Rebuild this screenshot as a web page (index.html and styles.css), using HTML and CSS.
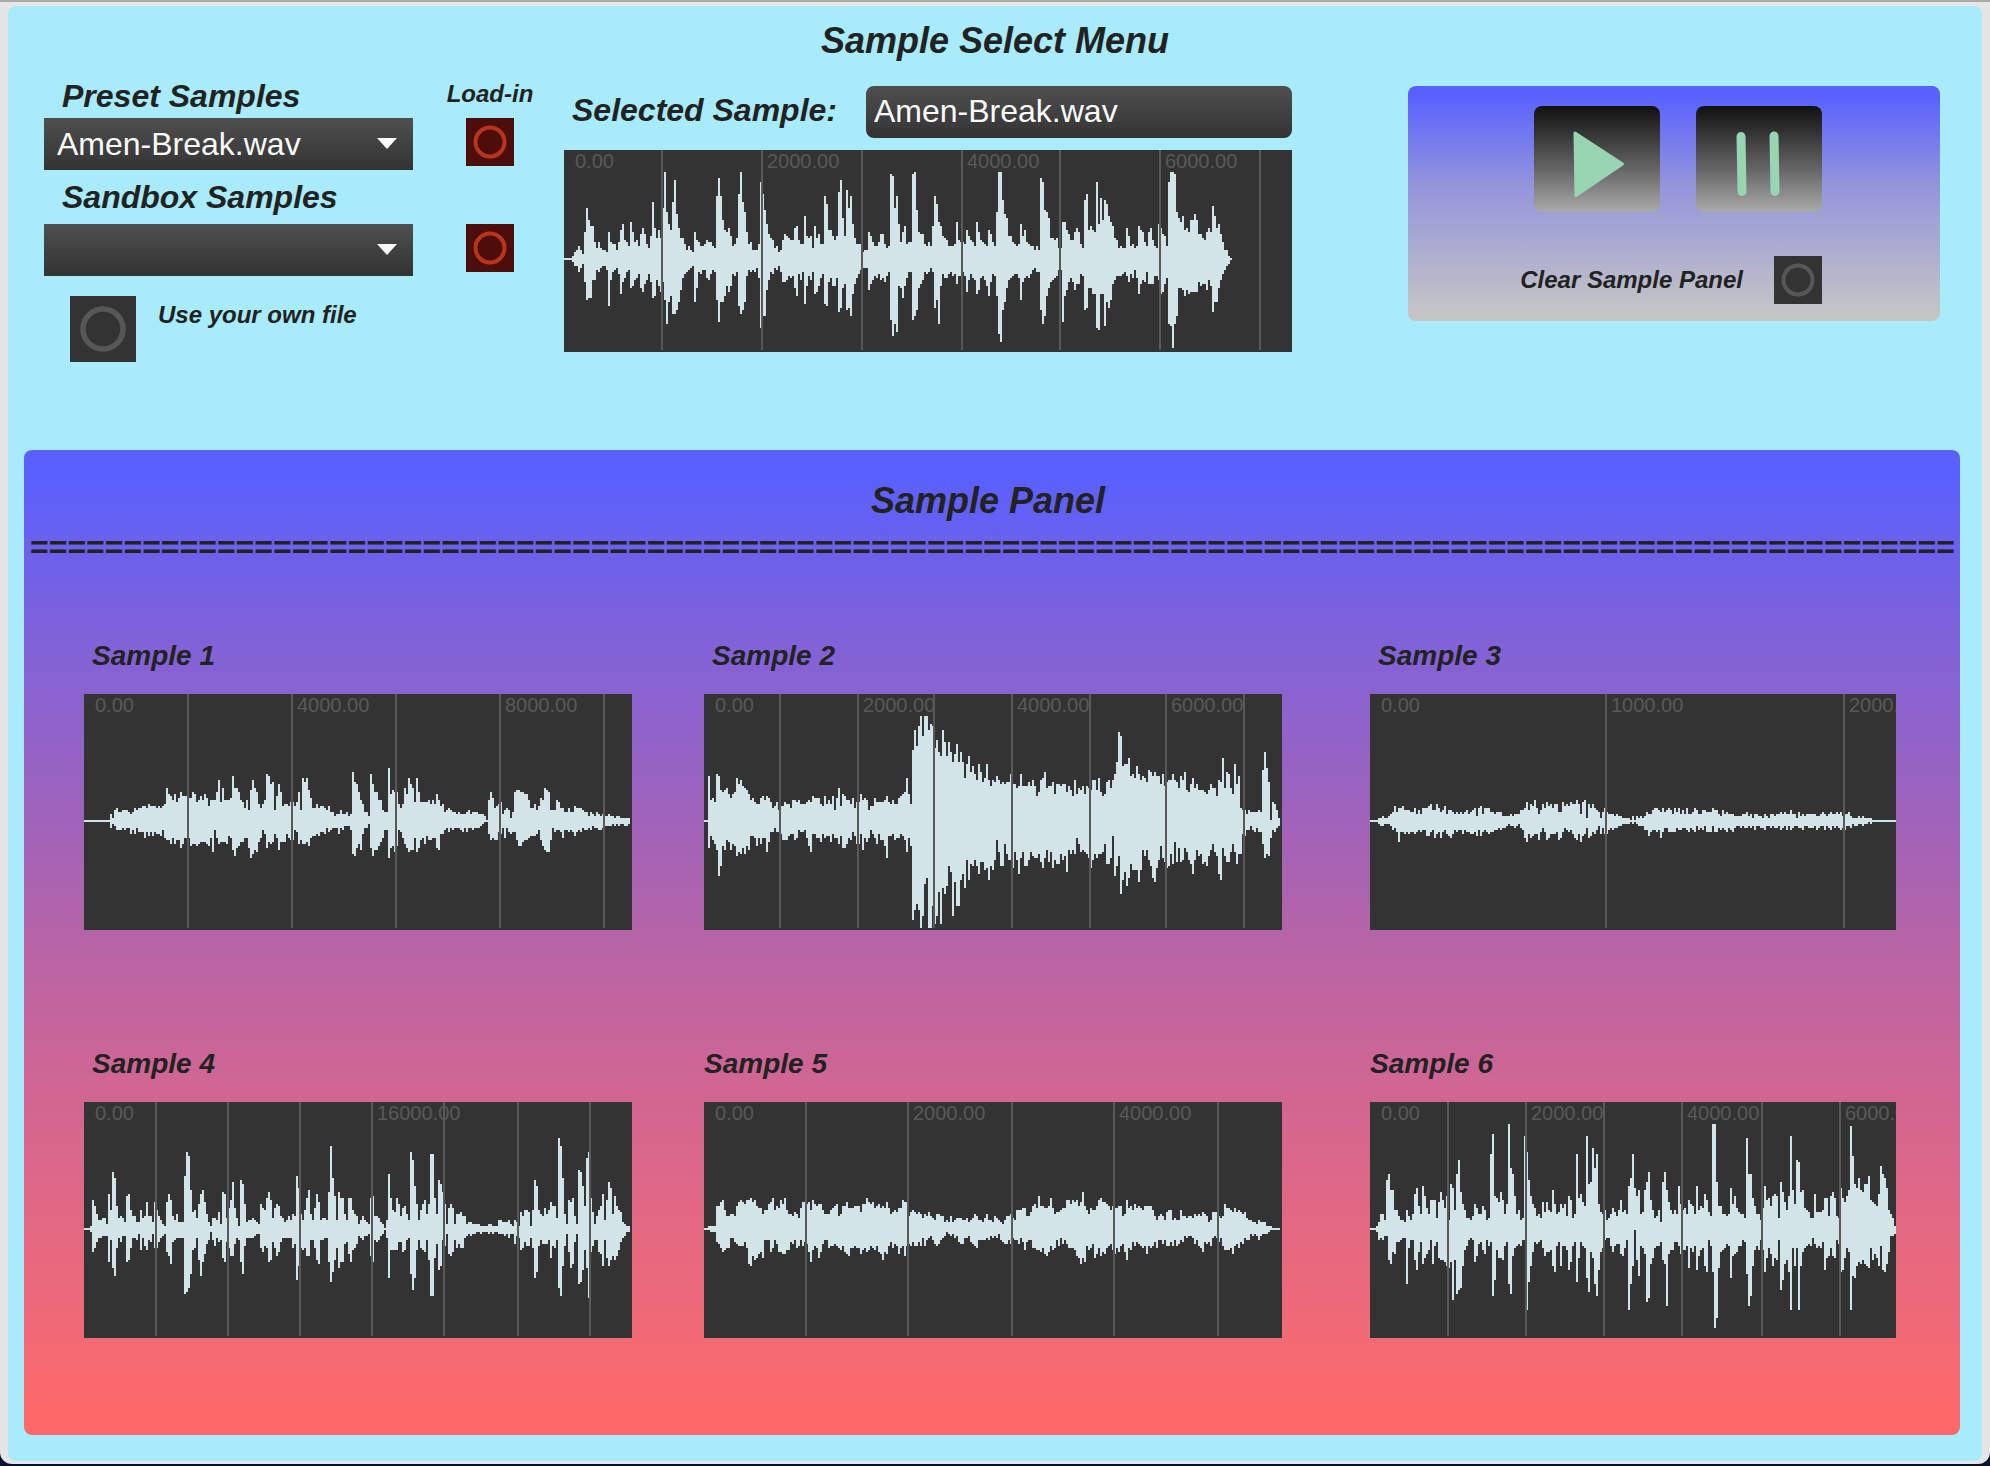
FILE: index.html
```html
<!DOCTYPE html>
<html lang="en">
<head>
<meta charset="utf-8">
<meta name="viewport" content="width=device-width, initial-scale=1">
<title>Sample Select Menu</title>
<link rel="stylesheet" href="styles.css">
</head>
<body>
<div class="window">
<main class="patch">
  <h1 class="title">Sample Select Menu</h1>

  <section class="menu">
    <div class="sources">
      <label class="heading" for="preset">Preset Samples</label>
      <span class="small load-title">Load-in</span>

      <div class="dropdown">
        <select id="preset"><option>Amen-Break.wav</option></select>
      </div>
      <button class="bang bang-red" type="button" aria-label="Load preset sample">
        <svg viewBox="0 0 48 48"><circle cx="24" cy="24" r="14.5" stroke-width="4"/></svg>
      </button>

      <label class="heading heading-mid" for="sandbox">Sandbox Samples</label>

      <div class="dropdown">
        <select id="sandbox"><option></option></select>
      </div>
      <button class="bang bang-red" type="button" aria-label="Load sandbox sample">
        <svg viewBox="0 0 48 48"><circle cx="24" cy="24" r="14.5" stroke-width="4"/></svg>
      </button>

      <div class="own-file">
        <button class="bang bang-large" id="own" type="button">
          <svg viewBox="0 0 66 66"><circle cx="33" cy="33" r="20" stroke-width="5.5"/></svg>
        </button>
        <label class="small" for="own">Use your own file</label>
      </div>
    </div>

    <div class="selected">
      <div class="selected-row">
        <label class="heading" for="selected">Selected Sample:</label>
        <input class="readout" id="selected" type="text" value="Amen-Break.wav" readonly>
      </div>
      <svg class="wave wave-short" data-wave="selected" data-axis="108">
        <path class="signal"/>
        <path class="grid" d="M98 0V200M198 0V200M298 0V200M398 0V200M496 0V200M596 0V200M696 0V200"/>
        <text x="11" y="18">0.00</text>
        <text x="203" y="18">2000.00</text>
        <text x="403" y="18">4000.00</text>
        <text x="601" y="18">6000.00</text>
      </svg>
    </div>

    <div class="transport">
      <div class="transport-buttons">
        <button class="key" type="button" aria-label="Play">
          <svg viewBox="0 0 126 106"><path class="play" d="M41 27L88.500 58L42 89.500Z"/></svg>
        </button>
        <button class="key" type="button" aria-label="Pause">
          <svg viewBox="0 0 126 106"><path class="pause" d="M45 30.500L46 85.500M78 30L79 85.500"/></svg>
        </button>
      </div>
      <div class="clear">
        <label class="small" for="clear">Clear Sample Panel</label>
        <button class="bang" id="clear" type="button">
          <svg viewBox="0 0 48 48"><circle cx="24" cy="24" r="14.5" stroke-width="4"/></svg>
        </button>
      </div>
    </div>
  </section>

  <section class="panel">
    <h2 class="title panel-title">Sample Panel</h2>
    <div class="rule" aria-hidden="true">=======================================================================================================</div>

    <div class="samples">
      <article class="sample">
        <h3>Sample 1</h3>
        <svg class="wave" data-wave="s1" data-axis="126">
          <path class="signal"/>
          <path class="grid" d="M104 0V234M208 0V234M312 0V234M416 0V234M520 0V234"/>
          <text x="11" y="18">0.00</text>
          <text x="213" y="18">4000.00</text>
          <text x="421" y="18">8000.00</text>
        </svg>
      </article>
      <article class="sample">
        <h3>Sample 2</h3>
        <svg class="wave" data-wave="s2" data-axis="126">
          <path class="signal"/>
          <path class="grid" d="M76 0V234M154 0V234M230 0V234M308 0V234M386 0V234M462 0V234M540 0V234"/>
          <text x="11" y="18">0.00</text>
          <text x="159" y="18">2000.00</text>
          <text x="313" y="18">4000.00</text>
          <text x="467" y="18">6000.00</text>
        </svg>
      </article>
      <article class="sample sample-last">
        <h3>Sample 3</h3>
        <svg class="wave" data-wave="s3" data-axis="126">
          <path class="signal"/>
          <path class="grid" d="M236 0V234M474 0V234"/>
          <text x="11" y="18">0.00</text>
          <text x="241" y="18">1000.00</text>
          <text x="479" y="18">2000.00</text>
        </svg>
      </article>
      <article class="sample">
        <h3>Sample 4</h3>
        <svg class="wave" data-wave="s4" data-axis="126">
          <path class="signal"/>
          <path class="grid" d="M72 0V234M144 0V234M216 0V234M288 0V234M360 0V234M434 0V234M506 0V234"/>
          <text x="11" y="18">0.00</text>
          <text x="293" y="18">16000.00</text>
        </svg>
      </article>
      <article class="sample sample-flush">
        <h3>Sample 5</h3>
        <svg class="wave" data-wave="s5" data-axis="126">
          <path class="signal"/>
          <path class="grid" d="M102 0V234M204 0V234M308 0V234M410 0V234M514 0V234"/>
          <text x="11" y="18">0.00</text>
          <text x="209" y="18">2000.00</text>
          <text x="415" y="18">4000.00</text>
        </svg>
      </article>
      <article class="sample sample-last sample-flush">
        <h3>Sample 6</h3>
        <svg class="wave" data-wave="s6" data-axis="126">
          <path class="signal"/>
          <path class="grid" d="M78 0V234M156 0V234M234 0V234M312 0V234M392 0V234M470 0V234"/>
          <text x="11" y="18">0.00</text>
          <text x="161" y="18">2000.00</text>
          <text x="317" y="18">4000.00</text>
          <text x="475" y="18">6000.00</text>
        </svg>
      </article>
    </div>
  </section>
</main>
</div>
<script src="waves.js"></script>
</body>
</html>
```
FILE: styles.css
```css
* { box-sizing: border-box; }

body {
  margin: 0;
  padding-bottom: 2px;
  background: #04122f;
  color: #222;
  font-family: "Liberation Sans", Arial, sans-serif;
}

button, select, input { font: inherit; border: 0; margin: 0; }
svg { display: block; }

.window {
  padding: 4px 8px 3px;
  border-top: 2px solid #ababab;
  border-radius: 0 0 12px 12px;
  background: #e5e5e5;
}

.patch {
  padding: 15px 0 26px;
  border-radius: 8px;
  background: #a8ebfb;
}

.title {
  margin: 0;
  font-size: 36px;
  font-weight: bold;
  font-style: italic;
  line-height: 40px;
  text-align: center;
}

.heading {
  font-size: 32px;
  font-weight: bold;
  font-style: italic;
  line-height: 36px;
  white-space: nowrap;
}

.small {
  font-size: 24px;
  font-weight: bold;
  font-style: italic;
  line-height: 32px;
  white-space: nowrap;
}

/* Upper menu */
.menu {
  display: grid;
  grid-template-columns: 489fr 728fr 617fr;
  column-gap: 31px;
  align-items: start;
  margin-top: 17px;
  padding: 0 42px 0 36px;
}

.sources {
  display: grid;
  grid-template-columns: 1fr 86px;
  grid-template-rows: 40px 52px 54px 52px auto;
  column-gap: 34px;
  justify-items: center;
  align-items: start;
}
.sources > .heading { justify-self: start; padding-left: 18px; }
.sources > .heading-mid { grid-column: 1 / -1; align-self: center; }

.dropdown {
  position: relative;
  width: 100%;
}
.dropdown::after {
  content: "";
  position: absolute;
  top: 20px;
  right: 16px;
  border: 10px solid transparent;
  border-top: 11px solid #fafafa;
  border-bottom: 0;
  pointer-events: none;
}
.dropdown select {
  display: block;
  width: 100%;
  height: 52px;
  padding: 0 48px 0 13px;
  appearance: none;
  border-radius: 0;
  background: linear-gradient(#4f4f4f, #333);
  color: #fafafa;
  font-size: 32px;
}

.bang {
  flex: none;
  width: 48px;
  height: 48px;
  padding: 0;
  background: #333;
}
.bang circle { fill: none; stroke: #575757; }
.bang-red { background: #4b0e0b; }
.bang-red circle { stroke: #b8341c; }
.bang-large { width: 66px; height: 66px; }

.own-file {
  grid-column: 1 / -1;
  justify-self: start;
  display: flex;
  gap: 22px;
  padding: 20px 0 0 26px;
}
.own-file .small { line-height: 38px; }

.selected { padding-top: 8px; }
.selected-row {
  display: flex;
  justify-content: space-between;
  margin-bottom: 12px;
  padding-left: 8px;
}
.selected-row .heading { line-height: 48px; }

.readout {
  flex: 0 1 426px;
  min-width: 0;
  height: 52px;
  padding: 0 8px 2px;
  border-radius: 8px;
  background: linear-gradient(#4f4f4f, #333);
  color: #fafafa;
  font-size: 32px;
}

.transport {
  margin: 8px 0 0 85px;
  padding: 20px 118px 17px 0;
  border-radius: 8px;
  background: linear-gradient(#5860ff 3%, #9494dc 42%, #c5c5c5 97%);
}
.transport-buttons {
  display: flex;
  justify-content: flex-end;
  gap: 36px;
  margin-bottom: 44px;
}
.key {
  width: 126px;
  height: 106px;
  padding: 0;
  border-radius: 8px;
  background: linear-gradient(#111, #333 25%, #666 60%, #aaa);
}
.play {
  fill: #98d5b3;
  stroke: #98d5b3;
  stroke-width: 3;
  stroke-linejoin: round;
}
.pause {
  fill: none;
  stroke: #98d5b3;
  stroke-width: 9;
  stroke-linecap: round;
}
.clear {
  display: flex;
  justify-content: flex-end;
  align-items: center;
  gap: 31px;
}

/* Waveform displays */
.wave {
  width: 100%;
  height: 236px;
  overflow: hidden;
  background: #333;
}
.wave-short { height: 202px; }
.wave .signal { fill: #d3e4e8; shape-rendering: crispEdges; }
.wave .grid { fill: none; stroke: #595959; stroke-width: 2; }
.wave text { fill: #595959; font-size: 20px; }

/* Lower panel */
.panel {
  margin: 88px 22px 0 16px;
  padding: 31px 0 97px;
  border-radius: 8px;
  background: linear-gradient(#5860ff 2%, #7c62dc 17%, #b864a4 51%, #ce6695 63%, #f36a74 91%, #ff6868 99%);
}
.panel-title { padding-right: 8px; }
.rule {
  margin-top: 6px;
  padding-left: 6px;
  overflow: hidden;
  font-size: 32px;
  font-weight: bold;
  line-height: 40px;
  white-space: nowrap;
}
.samples {
  display: grid;
  grid-template-columns: 548fr 578fr 542fr;
  gap: 116px 72px;
  margin-top: 71px;
  padding: 0 64px 0 60px;
}
.sample { min-width: 0; }
.sample-last { padding-left: 16px; }
.sample h3 {
  margin: 0 0 20px;
  padding-left: 8px;
  font-size: 28px;
  font-style: italic;
  line-height: 36px;
}
.sample-flush h3 { padding-left: 0; }
```
FILE: waves.js
```js
// Peak levels above and below the axis, one number per two-pixel column.
// "4*3" repeats a level; the key is the first column of each run.
const waves = {
  selected: {
    up: {
      0: "0*4 1 3 4 6 4 2 13 25 19 16 16 8 5 8 5 4 4 3 13 8 7 7 4 8 14 17 9 8 6 18 13 8 9 6 12 15 12 7 5 11 28 15 10 14 10 25",
      50: "43 23 17 14 28 39 22 15 10 10 7 4 6 4 3 13 9 8 6 6 7 9 8 8 6 5 31 40 31 19 14 13 15 11 6 7 10 32 43 28 23 13 7 8 4 4 4 7 38 32",
      100: "24 17 12 10 9 5 6 3 4 9 12 11 10 9 9 15 16 9 7 7 21 11 10 11 5 16 10 12 7 7 31 27 14 14 11 9 11 33 39 20 11 34 25 31 17 10 7 7 7 3",
      150: "4 4 13 11 8 6 6 8 12 12 7 5 6 42 41 25 31 17 8 13 16 7 8 8 42 43 24 13 12 12 7 6 8 6 16 31 27 18 16 11 10 9 6 6 6 7 18 9 8 8",
      200: "7 14 11 9 8 6 18 13 9 8 7 6 14 12 8 6 23 43 43 29 22 20 11 11 8 7 6 7 17 11 14 8 7 6 6 4 6 4 40 38 24 23 20 10 10 9 10 5 5 18",
      250: "18 14 12 9 9 13 15 13 7 5 29 32 14 16 14 13 38 17 30 19 29 27 21 18 16 10 9 5 6 5 5 15 11 6 7 5 6 16 14 13 8 6 13 15 9 6 5 17 15 12",
      300: "11 6 38 43 43 42 23 20 18 21 14 15 13 19 19 22 19 12 12 10 9 13 15 13 26 21 15 17 12 8 4 4 1 0"
    },
    down: {
      0: "0*4 1 3 3 6 4 2 11 20 19 19 10 10 5 6 4 3 3 5 23 10 6 5 4 7 17 11 9 6 5 14 13 10 9 7 14 16 12 10 7 11 19 18 10 13 16 11",
      50: "20 32 21 18 27 27 25 21 15 9 7 6 5 4 3 21 14 6 7 5 5 9 10 7 5 6 20 31 21 21 18 13 16 13 7 8 6 23 27 25 21 8 5 6 5 6 4 9 34 28",
      100: "28 15 10 6 7 4 5 3 6 11 11 10 8 9 8 14 18 7 10 6 22 13 8 10 6 17 16 13 9 7 22 23 11 9 13 13 9 26 24 14 12 25 24 28 17 12 9 7 5 4",
      150: "4 4 15 12 10 8 9 7 10 9 11 8 6 30 38 32 36 13 14 19 13 9 6 6 30 28 25 14 12 10 6 7 6 4 6 24 20 32 13 7 9 9 7 6 8 7 12 8 8 6",
      200: "8 16 10 7 9 10 17 15 9 8 10 13 18 11 7 8 18 37 41 25 21 14 10 9 8 7 7 9 20 11 9 8 9 7 5 4 6 6 25 32 28 18 14 11 10 9 8 5 5 31",
      250: "18 15 11 9 11 15 12 12 7 8 25 24 14 14 17 17 34 35 17 17 33 21 24 20 12 10 8 8 8 7 6 8 11 7 9 5 9 17 12 10 11 6 12 12 12 8 8 10 17 16",
      300: "12 9 32 33 44 32 28 14 14 15 18 15 17 16*4 11 13 12 12 15 10 13 26 21 21 14 10 7 5 3 2 0"
    }
  },
  s1: {
    up: {
      0: "0*13 3 1 5 6 4 4 5 5 5 4 3 4 6 5 6 6 7 7 6 8 7 7 7 6 7 6 7 8 16 13 12 10 13 9 11 14 12 12 12",
      52: "11 11 14 13 9 10 12 10 13 11 7 10 10 10 14 20 9 16 10 10 10 11 22 16 16 14 10 9 6 10 5 15 20 16 14 8 6 8 10 23 22 18 19 5 12 18 14 7 8 8 7 9",
      104: "9 7 9 14 5 21 19 21 15 11 6 6 8 6 7 7 6 5 7 4 4 2 3 3 5 3 3 4 2 3 24 19 18 14 10 8 4 4 2 23 18 14 14 10 10 5 4 4 26 13 15 14",
      156: "14 8 6 8 16 13 21 18 16 9 21 14 9*4 10 8 10 8 13 10 7 8 4 5 6 5 4 4 3 4 3 3 3 4 5 3 4 4 4 3 3 3 2 0 10 14 11 6 7 8",
      208: "9 3 5 6 5 1 4 14 15 15 14 14 13 13 10 6 6 8 5 7 11 10 16 15 14 5 5 5 10 9 6 6 4 4 6 4 4 7 6 6 6 5 4 4 2 4 3 2 4 3",
      258: "2 3 2 2 3 2 2 1 2 2 1*5"
    },
    down: {
      0: "0*13 3 1 2 4 4 4 3 4 3 3 6 4 6 3 5 5 5 8 5 7 5 7 5 6 6 7 4 8 9 9 11 8 11 9 9 13 11 8 8",
      52: "8 12 11 11 12 11 10 10 10 11 12 8 15 4 8 11 10 10 10 11 7 8 14 17 13 12 10 10 8 8 13 18 16 14 15 10 8 4 6 13 10 11 10 6 8 14 10 10 10 6 8 9",
      104: "9 4 5 11 9 11 11 10 12 8 7 7 6 7 5 5 6 3 5 4 3 3 3 6 3 4 2 2 2 4 16 17 13 11 14 6 3 3 1 13 17 14 14 12 10 8 4 4 18 13 12 15",
      156: "12 4 5 8 11 13 15 14 14 8 15 13 9 8 11 7 9 9 8 8 13 14 6 6 4 3 5 3 4 3 3 3 4 5 3 5 3 3 4 3 3 3 2 1 0 0 6 9 8 9 9 5",
      208: "6 3 8 3 5 6 5 5 9 12 12 10 9 9 8 7 7 7 6 4 9 12 14 15 15 9 3 5 4 4 5 8 4 4 5 4 5 7 5 4 5 3 4 4 3 4 2 3 3 4",
      258: "4 3 2 2 2 2 1 2 1 2 1 1 2 2 1"
    }
  },
  s2: {
    up: {
      0: "0 0 22 10 11 9 23 22 15 14 15 16 13 11 13 14 21 18 20 17 16 15 13 10 11 9 8 8 11 12 10 12 11 9 6 7 9 5",
      38: "7 7 9 8 8 6 10 10 9 10 8 8 8 9 10 9 12 11 11 11 8 7 12 8 10 8 12 5 11 16 7 13 12 10 10 8 11 6 9 9",
      78: "13 10 11 10 5 7 7 11 9*4 10 12 9 8 10 8 8 11 12 13 14 21 13 8 35 45 37 47 52 42 52 52 45 48 47 36",
      116: "40 34 32 45 39 32 39 34 29 33 38 29 34 29 21 28 32 24 27 23 20 28 24 19 21 28 20 17 20 19 22 20 18 19 18 19 19 23",
      154: "18 18 16 17 23 17 17 17 19 17 20 17 12 14 20 21 24 16 17 17 19 13 18 18 17 18 18 14 17 15 12 20 13 16 15 17 13 17 16",
      193: "15 20 20 15 21 14 12 13 19 20 16 20 23 29 44 42 27 28 28 31 22 23 21 27 23 20 22 21 19 25 24 22 24 22 22 18 23 17",
      231: "19 20 20 23 20 19 16 22 20 24 15 14 18 21 16 18 15 15 15 14 13 15 18 16 16 12 20 19 31 16 24 23 16 13 28 18 22 6 5",
      270: "5 3 5 4 4 4 4 5 4 25 34 26 19 0 9 8 5 1"
    },
    down: {
      0: "0 0 13 7 9 11 14 27 22 12 14 9 10 14 11 12 17 15 16 13 16 12 14 7 7 8 12 8 11 8 8 15 10 5 5 3 5 5",
      38: "6 9 9 9 7 6 6 9 8 4 5 5 4 8 12 15 6 6 8 8 10 6 8 7 7 10 6 8 8 11 7 13 13 11 8 9 5 7 11 11",
      78: "6 14 8 10 8 4 6 8 11 6 9 9 12 18 7 7 6 9 8 8 6 7 9 15 8 12 49 44 41 44 53 47 31 28 53 53 42 51",
      116: "47 35 51 33 36 32 22 25 47 30 42 42 29 26 33 19 29 21 22 19 22 26 20 20 24 23 29 22 24 19 9 15 22 22 11 16 19 19",
      154: "23 15 19 26 18 15 22 22 19 15 17 18 18 16 20 23 18 14 20 15 23 19 21 21 16 19 17 25 14 16 14 16 8 11 15 14 15 16 18",
      193: "23 19 16 18 16 16 15 11 21 21 18 7 27 22 17 36 29 25 32 28 21 24 24 24 30 24 14 17 14 19 22 28 30 23 19 12 18 20",
      231: "23 22 16 21 10 20 13 20 19 13 15 19 21 26 19 14 17 16 21 20 22 17 14 11 15 17 26 29 13 17 20 20 15 11 15 21 16 16 6",
      270: "7 4 4 2 4 5 3 5 5 11 18 16 17 8 4 5 3 2"
    }
  },
  s3: {
    up: {
      0: "0*4 1 1 2 1 1 2 3 4 7 4 6 6 7 5 5 5 4 4 6 3 5 3 6 6 6 7 8 5 5 8 6 4 5 7 3 5 5 4 3 4 3 4 3 4 5 3",
      50: "4 5 6 2 6 7 3 6 6 6 4 4 3 4 4 4 2*4 3 2 3 3 3 5 5 6 9 5 8 7 10 6 3 5 8 6 9 7 8 6 8 8 4 4 9 7 8 7",
      100: "9 8 8 10 8 3 9 10 1 8 6 8 6 5 4 1 4 6 4 3 3 3 2 3 2 2 1*4 0 2 0 2 1 2 1 2 4 3 3 5 6 6 5 4 6 4 5 6",
      150: "5 3 6 4 6 3 5 3 6 3 3 4 6 5 3 3 5 5 4 4 4 6 5 5 3 2 5 3 4 3 3 3 2*4 3 3 4 2 3 1 3 3 2 2 1 3 2 1",
      200: "3 3 2 3 3 4 3 4 3 3 5 3 3 1 4 2 3 2 3 3 3 3 3 2 2 3 4 3 2 3 4 3 3 4 3 4 2",
      237: "3 3 4 2 1 1 1 2 1 2 1 1 1 1 0*12"
    },
    down: {
      0: "0*4 1 2 2 1 1 1 2 4 3 5 10 5 5 6 5 6 5 5 6 5 4 5 4 4 7 7 5 4 8 6 5 8 5 4 6 7 8 6 4 5 4 4 6 4 5 5",
      50: "6 6 5 7 4 7 5 4 5 6 5 5 4 4 3 4 3 3 2 1 2 2 3 2 1 3 4 8 10 6 8 7 6 6 9 5 3 5 9 8 6 6 6 5 9 8 5 3 4 5",
      100: "4 6 8 9 6 10 7 6 3 8 7 5 6 4 2 6 3 6 6 4 3 4 3 3 2 2 1 1 1 1 0 1 0 1 2 2 2 4 4 7 5 4 4 5 4 8 5 3 3 5",
      150: "5 5 5 3 4 4 3 3 4 5 3 4 5 2 4 3 4 2 5 5 5 2 5 5 3 4 3 4 5 3 4 5 3 2 2 3 2 3 3 2 3 2 4 2 2 3 3 4 2 2",
      200: "3 2 3 3 2 4 3 2 4 2 4 3 2 2 3 3 4 2 2 3 3 3 2 4 3 2 2 4 2 3 4 2 3 2 3 4 3",
      237: "4 2 2 3 1 2 2 1 1 2 1 1 0 1 0*12"
    }
  },
  s4: {
    up: {
      0: "0*3 1 14 11 7 4 4 5 5 2 17 9 28 25 11 5 6 5 3 16 17 9 6 6 3 3 9 5 6 13 6 6 3 13",
      36: "9 6 4 2 1 13 17 14 6 4 7 3 3 3 26 38 36 19 8 9 5 12 17 19 13 7 3 1 5 5 4 8 2 18 17 5",
      72: "10 14 23 10 5 1 24 22 12 3 4 4 5 4 3 2 12 10 9 15 18 14 5 10 12 11 6 5 3 4 6 4 7 6 26 20",
      108: "7 4 9 15 19 7 4 10 17 13 4 5 5 4 18 41 25 16 4 18 15 15 7 4 15 15 9 7 6 2 4 6 4 3 2 15",
      144: "16 6 6 5 3 2 0 4 27 15 9 8 15 12 6 10 11 7 4 38 34 21 12 4 9 12 14 7 12 37 37 15 7 24 22 18",
      180: "12 2 10 12 10 2 7 7 8 6 6 2 3 3 2*4 1*4 2 2 1 1 1 4 4 3 3 3 4 2 1 4 3",
      217: "1 8 6 9 9 8 1 9 24 21 9 7 6 10 7 9 13 11 11 5 45 41 25 7 2 14 13 15 6 2 29 28 21 11 35 38",
      253: "15 8 2 6 9 11 17 4 14 23 20 7 16 11 9 8 3 2 1 1"
    },
    down: {
      0: "0*3 1 11 9 6 4 4 3 3 3 16 5 19 23 9 4 6 3 3 16 15 9 4 4 5 2 10 4 8 10 5 6 2 9",
      36: "9 6 4 3 2 11 13 17 6 5 4*4 32 31 29 22 10 9 4 15 23 16 12 7 5 1 5 8 4 6 5 14 16 6",
      72: "9 13 13 7 4 5 16 22 8 4*4 3 2 2 9 11 8 9 16 15 6 9 13 11 6 4 4 4 4 4 9 7 25 18",
      108: "9 10 9 13 13 5 5 9 15 17 5 5 4 4 16 26 21 15 9 19 16 16 7 6 12 16 10 9 7 3 4 5 3 3 2 13",
      144: "16 5 6 5 3 2 0 4 24 10*4 6 6 11 10 5 4 22 30 24 10 5 9 10 11 5 15 33 33 14 7 20 18 5",
      180: "8 2 12 13 11 5 9 7 9 9 4 3 2 3 2 2 1 1 2 1 1 1 2 1 2 1 1 2 2 2 3 2 4 2 2 7 3",
      217: "4 10 9 6 8 8 4 9 24 21 8 5 7 7 7 5 14 8 9 5 29 33 18 8 2 11 19 17 6 2 27 26 20 10 19 34",
      253: "11 8 5 5 11 12 18 5 14 18 15 13 15 13 10 6 4 3 1 1"
    }
  },
  s5: {
    up: {
      0: "0 0 1*4 11 11 13 14 9 6 6 7 7 6 11 13 14 13 12 14 14 15 13 14 11 10 10 7 9 9 12 13 15 9 11 10 14 12 15 9 7 7 6 8 7 5 10 13 13",
      51: "12 13 9 14 12 11 12 12 9 7 7 7 9 10 11 12 6 7 11 11 13 10 10 10 11 11 11 8 12 12 15 13 12 13 10 11 12 10 11 10 13 10 7 8 9 8 10 10 14 13 13",
      102: "6 8 9 8 7 8 7 5 7 6 8 6 5 4 7 7 6 6 3 4 3 6 3 4 5 5 5 4 4 5 3 4 5 7 6 4 4 3 5 7 4 4 3 6 5 4 3 2 4 6 6 7",
      154: "5 4 9 9 9 10 10 6 6 8 11 12 10 16 11 11 10 10 11 15 10 7 8 8 9 10 10 14 14 12 14 13 14 11 13 18 11 9 7 10 9 9 11 14 15 13 13 12 11 9 11",
      205: "10 10 11 11 6 7 14 10 11 9 12 10 11 10 9 11*4 9 6 4 6 7 6 4 8 9 9 4 5 4 4 9 6 6 5 6 6 5 7 6 7 6 8 7 6 3 4 8",
      255: "8 8 6 5 6 12 10 10 9 8 10 8 9 8 7 8 5 4 4 3 3 2 4 3 3 3 1 1 1 0*4"
    },
    down: {
      0: "0 0 0 1 1 1 6 7 9 11 10 9 9 4 4 6 7 8 8 8 6 9 17 18 13 15 14 12 11 14 5 5 5 11 9 5 7 11 11 12 12 10 10 6 7 5 9 8 5 8 6",
      51: "7 11 16 10 8 9 14 11 7 5 5 9 8 8 7 8 9 10 8 11 12 13 9 9 8 9 9 12 10 9 11 10 8 9 10 8 11 12 15 11 12 8 6 9 7 8 12 9 8 13 8",
      102: "7 8 6 8 8 6 8 4 8 5 4 3 5 7 8 7 5 4 3 1 2 3 2 4 3 6 7 7 4 4 3 6 7 8 9 5 5 5 5 4 5 3 4 3 4 2 5 6 7 7 5 7",
      154: "4 5 5 7 4 6 10 6 5 5 9 9 10 10 11 9 12 13 11 8 10 9 5 8 4 7 5 7 9 9 9 10 13 14 17 14 16 8 10 9 7 14 12 9 13 11 12 9 8 7 10",
      205: "12 9 11 8 7 11 15 9 10 6 8 6 7 8 9 8 12 8 9 8 6 9 5 5 7 5 8 8 6 8 5 8 7 5 6 3 4 3 3 4 7 5 8 9 11 6 7 6 8 4",
      255: "3 4 6 4 8 10 10 10 9 12 8 7 9 6 7 4 5 5 2 3 2 3 5 3 2 2 2 1 0*5"
    }
  },
  s6: {
    up: {
      0: "0*3 1 3 7 7 4 24 27 19 19 9 9 6 4 4 3 9 6 4 7 17 20 11 7 21 16 10 7 14 14 14 5 13 18 14 10 16",
      39: "4 22 20 9 27 34 18 12 9 5 5 4 6 12 10 7 7 11 9 4 5 37 47 16 15 13 18 14 7 12 52 30 27 16 7 9 4 5 46",
      78: "38 24 16 12 10 6 7 5 13 8 13 9 8 19 12 7 8 12 10 12 6 16 14 5 7 37 15 17 13 11 46 22 23 40 30 37 12 8 7",
      117: "9 4 5 7 10 8 6 9 14 8 9 7 21 25 37 20 16 19 7 8 19 23 28 14 9 5 6 9 3 23 28 19 13 9 7 9 7 21 12",
      156: "9 10 7 14 12 11 7 21 9 11 10 17 14 8 6 52 52 23 11 11 7 7 6 7 20 12 16 10 8 7 7 5 45 27 27 15 11 7 7 4",
      196: "10 21 14 15 11 16 17 16 5 23 18 13 9 16 46 19 12 34 33 18 19 10 9 8 5 5 17 8 8 8 9 15 15 6 16 18 15 6 5",
      235: "20 15 13 16 19 51 36 22 20 25 19 18 22 22 26 14 13 12 11 17 31 27 25 20 9 7 5 1"
    },
    down: {
      0: "0*3 1 5 4 5 3 3 15 17 11 12 6 6 5 4 4 27 9 5 5 15 20 11 6 17 14 12 10 5 17 8 6 14 15 15 16 18",
      39: "19 16 35 15 32 30 29 18 10 8 5 4 5 16 13 7 6 10 12 5 8 6 33 25 10 14 14 15 8 6 27 32 13 9 8 7 8 5 5",
      78: "40 26 18 11 6 7 6 5 9 13 11 11 10 18 21 8 6 18 8 8 10 20 16 8 6 26 14 6 8 9 24 31 11 14 27 33 20 11 9",
      117: "5 4 4 8 11 8 7 7 12 13 9 5 40 27 18 0 15 23 8 9 12 36 34 17 14 9 8 8 6 15 17 38 12 10 10 6 6 8 12",
      156: "10 10 8 19 9 11 8 20 13 10 9 18 21 5 8 21 49 44 19 11 10 9 7 8 24 13 12 11 8 8 5 6 22 38 33 18 10 8 10 5",
      196: "10 21 14 9 12 18 14 15 5 30 25 17 15 21 40 9 18 9 40 18 11 9 8 7 8 4 7 9 8 9 6 20 14 13 9 13 14 5 7",
      235: "21 20 14 9 11 40 23 24 18 16 17 15 17 18 19 9 15 12 14 18 8 20 21 17 11 3 3 2"
    }
  }
};

function expand(runs) {
  const levels = [];
  for (const start of Object.keys(runs)) {
    let column = Number(start);
    for (const token of runs[start].split(" ")) {
      const [level, count = 1] = token.split("*").map(Number);
      for (let i = 0; i < count; i++) levels[column++] = level;
    }
  }
  return levels;
}

for (const svg of document.querySelectorAll("[data-wave]")) {
  const { up, down } = waves[svg.dataset.wave];
  const axis = Number(svg.dataset.axis);
  const below = expand(down);
  const d = expand(up).map((level, column) => {
    const top = axis - 2 * level;
    const bottom = axis + 2 + 2 * (below[column] || 0);
    return `M${2 * column} ${top}h2V${bottom}h-2z`;
  });
  svg.querySelector(".signal").setAttribute("d", d.join(""));
}
```
